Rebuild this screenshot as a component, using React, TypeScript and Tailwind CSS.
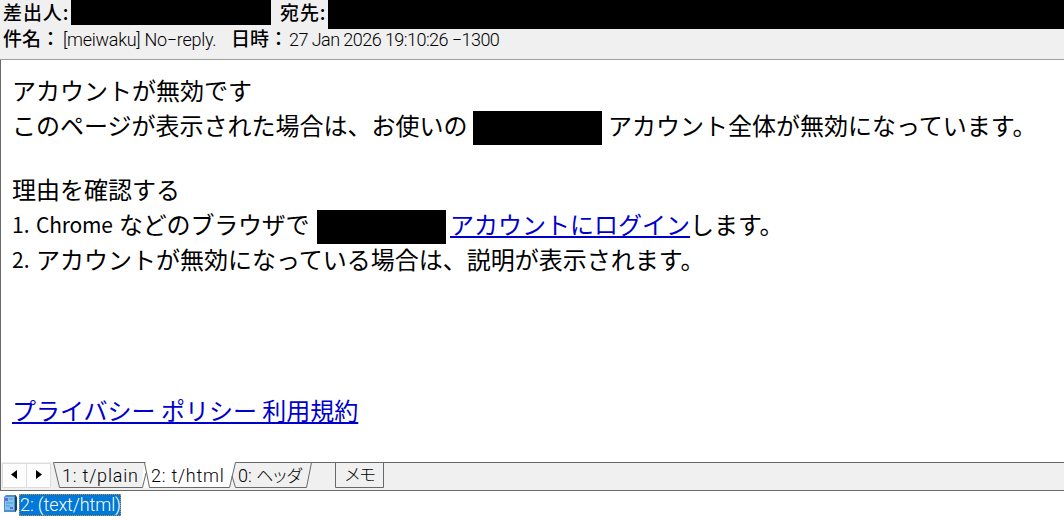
import type { ReactNode } from "react";

const Redacted = ({ className }: { className: string }) => (
  <span className={`shrink-0 bg-black ${className}`} />
);

const Line = ({ className = "", children }: { className?: string; children: ReactNode }) => (
  <p className={`flex h-[35px] items-center whitespace-pre ${className}`}>{children}</p>
);

const Latin = ({ className, children }: { className: string; children: ReactNode }) => (
  <span className={`mt-px shrink-0 text-[21px] ${className}`}>{children}</span>
);

const Header = () => (
  <header className="h-[60px] shrink-0 border-b border-[#a0a0a0] bg-[#f0f0f0] text-[19px] leading-none whitespace-nowrap">
    <div className="flex h-[29px]">
      <span className="w-[71px] pl-[3px] leading-[23px] tracking-[0.9px] font-medium">差出人:</span>
      <Redacted className="h-[25px] w-[200px]" />
      <span className="w-[57px] pl-[9px] leading-[23px] tracking-[0.9px] font-medium">宛先:</span>
      <Redacted className="h-[29px] flex-1" />
    </div>
    <div className="flex pl-[3px]">
      <span className="-mt-px w-[60px] font-medium">件名：</span>
      <span className="w-[168px] font-['Roboto'] text-[18px] leading-[21px] font-light tracking-[-0.28px]">
        [meiwaku] No−reply.
      </span>
      <span className="-mt-px w-[58px] font-medium">日時：</span>
      <span className="font-['Roboto'] text-[18px] leading-[21px] font-light tracking-[-0.55px]">
        27 Jan 2026 19:10:26 −1300
      </span>
    </div>
  </header>
);

const Message = () => (
  <main className="flex-1 pt-[12px] pl-[11px] text-[24px] leading-[35px]">
    <Line>アカウントが無効です</Line>
    <Line>
      <span className="w-[461px]">このページが表示された場合は、お使いの</span>
      <Redacted className="mt-[7px] h-[34px] w-[129px]" />
      <span className="ml-[6px]">アカウント全体が無効になっています。</span>
    </Line>
    <Line className="mt-[29px]">理由を確認する</Line>
    <Line>
      <Latin className="w-[24px]">1. </Latin>
      <Latin className="w-[83px] tracking-[-0.2px]">Chrome </Latin>
      <span className="w-[198px] tracking-[-0.2px]">などのブラウザで</span>
      <Redacted className="mt-[6px] h-[34px] w-[129px]" />
      <a className="ml-[4px] text-[#0000cc] underline">アカウントにログイン</a>
      <span>します。</span>
    </Line>
    <Line>
      <Latin className="w-[24px]">2. </Latin>
      <span>アカウントが無効になっている場合は、説明が表示されます。</span>
    </Line>
    <Line className="mt-[116px]">
      <a className="text-[#0000cc] underline">プライバシー ポリシー 利用規約</a>
    </Line>
  </main>
);

const Tabs = () => (
  <nav className="relative flex h-[28px] shrink-0 bg-[#f0f0f0] font-['Roboto','Noto_Sans_CJK_JP'] text-[18px] leading-[27px] font-light whitespace-nowrap">
    <svg className="absolute inset-0" width="1063" height="28" fill="none" stroke="#696969">
      <path d="M143 0L149 25.5H228.5L234 0Z" fill="#fff" stroke="none" />
      <path d="M144.5 0L141.5 10V25.5H149Z" fill="#fff" stroke="none" />
      <path d="M52.5 .5H144.5M52.5 .5L58.5 25.5H141.5L145 11M143.5 .5L148.5 25.5H228.5L234.5 .5H1063M231 14L234.5 25.5H305.5L310.5 .5" />
      <path d="M334.5 .5V25.5H382.5V.5" />
    </svg>
    <div className="relative w-[49px] shrink-0">
      <svg width="52" height="28">
        <path d="M1.5 1.5H25.5V25.5H1.5ZM25.5 1.5H49.5V25.5H25.5Z" fill="#fdfdfd" stroke="#dcdcdc" />
        <path d="M16 8V17L10 12.5ZM35 8V17L41 12.5Z" fill="#000" />
      </svg>
    </div>
    <span className="relative ml-[12px] w-[89px] tracking-[0.8px]">1: t/plain</span>
    <span className="relative w-[87px] tracking-[0.75px]">2: t/html</span>
    <span className="relative w-[106px]">
      0: <span className="text-[17px] tracking-[-2px]">ヘッダ</span>
    </span>
    <span className="relative text-[17px] tracking-[-2px]">メモ</span>
  </nav>
);

const DocIcon = () => (
  <svg width="16" height="20" viewBox="0 0 16 20">
    <path d="M1 3L3 1H13V18H1Z" fill="#4b91c5" />
    <path d="M12 1L14 3V16L12 18Z" fill="#173f65" />
    <path d="M2 3H11V16H2Z" fill="#7fc4ed" />
    <path d="M2 4H5V7H2ZM7 13H10V15H7Z" fill="#8058e8" />
    <path d="M6 5H10M3 9H10M3 12H7" stroke="#4a9bd2" />
  </svg>
);

const App = () => (
  <div
    lang="ja"
    className="flex h-[520px] w-[1064px] flex-col overflow-hidden bg-white font-['Noto_Sans_CJK_JP',sans-serif] text-black"
  >
    <Header />
    <div className="flex h-[431px] shrink-0 flex-col border-b border-l border-b-[#696969] border-l-[#696969]">
      <Message />
      <Tabs />
    </div>
    <div className="flex pt-[3px] pl-[3px]">
      <DocIcon />
      <span className="h-[22px] w-[102px] border border-dotted border-[#d08a40] bg-[#0078d7] font-['Roboto'] text-[18px] leading-[20px] font-light tracking-[-0.1px] whitespace-nowrap text-white">
        2: (text/html)
      </span>
    </div>
  </div>
);

export default App;
